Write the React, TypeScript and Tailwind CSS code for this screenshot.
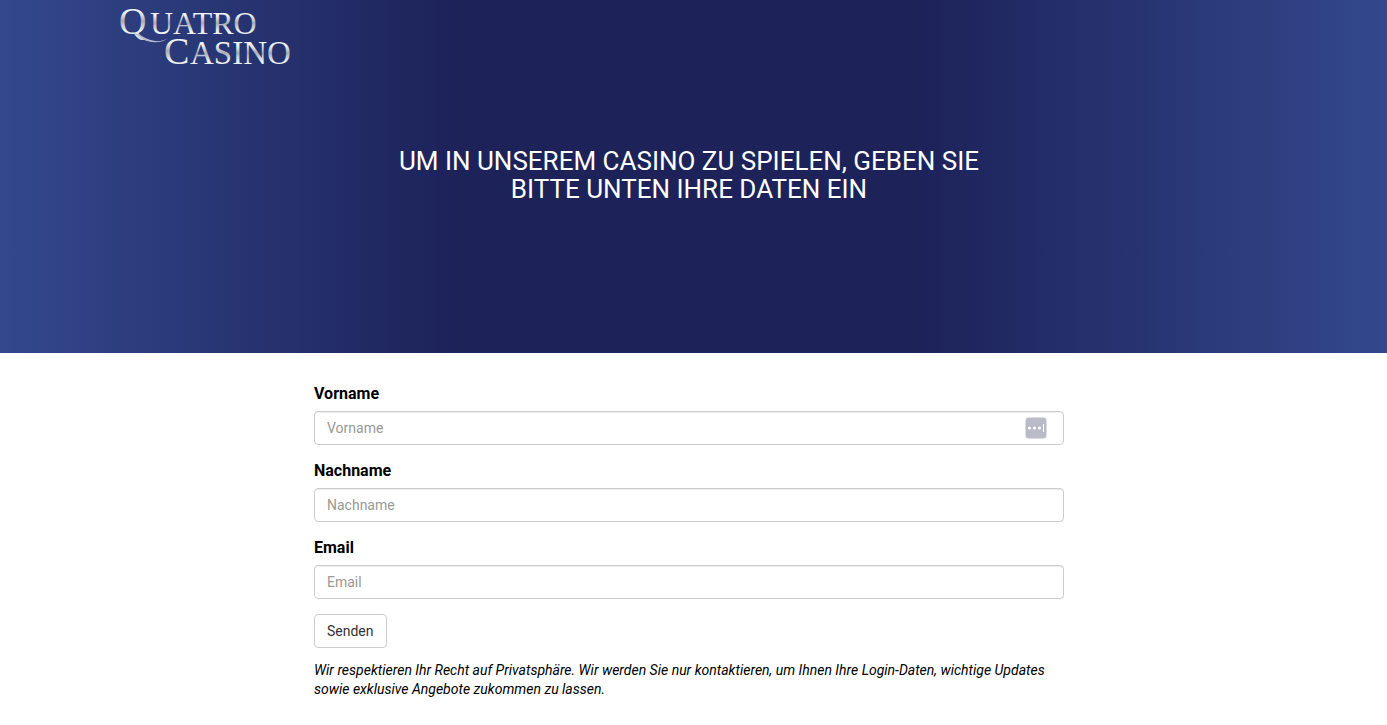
import { useId } from 'react';

interface FieldProps {
  label: string;
  type?: string;
  autofill?: boolean;
}

const Logo = () => (
  <svg width="176" height="75" viewBox="0 0 176 75" role="img" aria-label="Quatro Casino">
    <defs>
      <linearGradient id="silver" x1="0" y1="0" x2="0" y2="1">
        <stop offset="0" stopColor="#ffffff" />
        <stop offset="0.3" stopColor="#f0f0f3" />
        <stop offset="0.5" stopColor="#a9abb8" />
        <stop offset="0.75" stopColor="#f4f4f6" />
        <stop offset="1" stopColor="#d0d1d9" />
      </linearGradient>
    </defs>
    <g fill="url(#silver)" fontFamily="'Liberation Serif', serif">
      <text x="0" y="34" fontSize="38">Q</text>
      <text x="31" y="34" fontSize="32">UATRO</text>
      <text x="45" y="64" fontSize="38">C</text>
      <text x="71" y="64" fontSize="33">ASINO</text>
    </g>
    <path d="M14 33c6 0 9 4 15 6 7 3 14 3 20-1-6 5-13 5-21 3-6-2-9-6-14-8z" fill="#b9bcca" />
  </svg>
);

const AutofillIcon = () => (
  <svg width="22" height="22" viewBox="0 0 22 22" aria-hidden="true">
    <rect x="0.5" y="0.5" width="21" height="21" rx="3.5" fill="#babbc9" />
    <circle cx="4.5" cy="11" r="1.5" fill="#fff" />
    <circle cx="9.5" cy="11" r="1.5" fill="#fff" />
    <circle cx="14.5" cy="11" r="1.5" fill="#fff" />
    <rect x="18" y="7" width="1" height="8" fill="#fff" />
  </svg>
);

const Field = ({ label, type = 'text', autofill = false }: FieldProps) => {
  const id = useId();
  return (
    <div className="mb-[15px]">
      <label htmlFor={id} className="mb-1.5 block text-base leading-[22px] font-bold">
        {label}
      </label>
      <div className="relative">
        <input
          id={id}
          type={type}
          placeholder={label}
          className="block h-[34px] w-full rounded border border-[#ccc] bg-white px-3 text-sm text-[#555] shadow-[inset_0_1px_1px_rgba(0,0,0,0.075)] placeholder:text-[#999]"
        />
        {autofill && (
          <span className="absolute top-1.5 right-[17px]">
            <AutofillIcon />
          </span>
        )}
      </div>
    </div>
  );
};

export default function App() {
  return (
    <div className="min-h-screen bg-white font-['Roboto',sans-serif] text-black">
      <header className="bg-[linear-gradient(to_right,#33488d_0%,#1d2259_33%,#1d2259_66%,#33488d_100%)] pr-[9px]">
        <div className="mx-auto max-w-[1170px] px-[15px] pb-[150px]">
          <a href="#" className="inline-block align-top">
            <Logo />
          </a>
          <h1 className="mx-auto mt-18 max-w-[600px] text-center text-[26px] leading-7 text-white uppercase">
            Um in unserem Casino zu spielen, geben Sie bitte unten Ihre Daten ein
          </h1>
        </div>
      </header>

      <main className="pr-[9px]">
        <form className="mx-auto max-w-[780px] px-[15px] pt-[30px]">
          <Field label="Vorname" autofill />
          <Field label="Nachname" />
          <Field label="Email" type="email" />
          <button type="button" className="h-[34px] rounded border border-[#ccc] bg-white px-3 text-sm text-[#333]">
            Senden
          </button>
          <p className="mt-[13px] text-sm leading-[19px] italic">
            Wir respektieren Ihr Recht auf Privatsphäre. Wir werden Sie nur kontaktieren, um Ihnen Ihre Login-Daten,
            wichtige Updates sowie exklusive Angebote zukommen zu lassen.
          </p>
        </form>
      </main>
    </div>
  );
}
